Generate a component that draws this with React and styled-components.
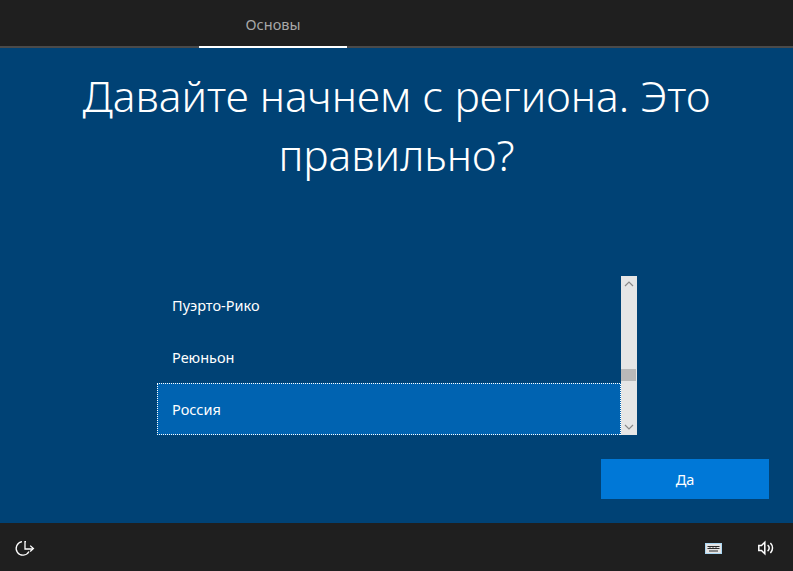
import React from "react";
import styled, { createGlobalStyle } from "styled-components";

const Global = createGlobalStyle`
  html, body { margin: 0; padding: 0; background: #1f1f1f; }
  body { font-family: "Noto Sans", sans-serif; }
`;

const Page = styled.div`
  width: 793px;
  height: 571px;
  display: flex;
  flex-direction: column;
  overflow: hidden;
`;

const TopBar = styled.header`
  height: 46px;
  flex: none;
  background: #1f1f1f;
  border-bottom: 2px solid #4a4a4a;
  padding-left: 199px;
  display: flex;
`;

const Tab = styled.div`
  width: 148px;
  height: 48px;
  box-sizing: border-box;
  border-bottom: 2px solid #ffffff;
  color: #a8a8a8;
  font-size: 14.5px;
  line-height: 49px;
  text-align: center;
`;

const Main = styled.main`
  flex: 1;
  background: #004275;
  display: flex;
  flex-direction: column;
  align-items: center;
  min-height: 0;
`;

const Title = styled.h1`
  margin: 18px 0 0;
  width: 680px;
  height: 210px;
  flex: none;
  color: #ffffff;
  font-weight: 300;
  font-size: 42.6px;
  line-height: 59px;
  text-align: center;
`;

const ListWrap = styled.div`
  width: 480px;
  height: 159px;
  margin-left: 1px;
  display: flex;
  flex: none;
`;

const List = styled.ul`
  width: 464px;
  margin: 0;
  padding: 3px 0 0;
  list-style: none;
  display: flex;
  flex-direction: column;
`;

const Item = styled.li`
  height: 52px;
  box-sizing: border-box;
  padding-left: 15px;
  display: flex;
  align-items: center;
  color: #ffffff;
  font-size: 14.5px;
  ${(p) =>
    p.$selected &&
    `
    background-color: #0063b1;
    background-image:
      repeating-linear-gradient(90deg, #fff 0 1px, transparent 1px 2px),
      repeating-linear-gradient(90deg, #fff 0 1px, transparent 1px 2px),
      repeating-linear-gradient(0deg, #fff 0 1px, transparent 1px 2px),
      repeating-linear-gradient(0deg, #fff 0 1px, transparent 1px 2px);
    background-size: 100% 1px, 100% 1px, 1px 100%, 1px 100%;
    background-position: 0 0, 0 100%, 0 0, 100% 0;
    background-repeat: no-repeat;
  `}
`;

const Scrollbar = styled.div`
  width: 16px;
  background: #e6e6e6;
  display: flex;
  flex-direction: column;
  align-items: center;
  justify-content: space-between;
  position: relative;
`;

const Arrow = styled.svg`
  width: 16px;
  height: 16px;
  flex: none;
`;

const Thumb = styled.div`
  position: absolute;
  left: 0;
  top: 93px;
  width: 15px;
  height: 12px;
  background: #b9b9b9;
`;

const Actions = styled.div`
  width: 793px;
  box-sizing: border-box;
  padding: 24px 24px 0 0;
  display: flex;
  justify-content: flex-end;
`;

const Button = styled.button`
  width: 168px;
  height: 40px;
  border: 0;
  background: #0078d7;
  color: #ffffff;
  font-size: 14.5px;
  font-family: "Noto Sans", sans-serif;
  padding: 0;
`;

const BottomBar = styled.footer`
  height: 48px;
  flex: none;
  background: #1f1f1f;
  display: flex;
  align-items: center;
  padding: 0 19px 0 16px;
`;

const IconSlot = styled.svg`
  flex: none;
  width: ${(p) => p.$w}px;
  height: ${(p) => p.$h}px;
  margin-left: ${(p) => p.$ml || 0}px;
  margin-top: 2px;
  overflow: visible;
`;

const Spacer = styled.div`
  flex: 1;
`;

export default function App() {
  return (
    <Page>
      <Global />
      <TopBar>
        <Tab>Основы</Tab>
      </TopBar>
      <Main>
        <Title>Давайте начнем с региона. Это правильно?</Title>
        <ListWrap>
          <List>
            <Item>Пуэрто-Рико</Item>
            <Item>Реюньон</Item>
            <Item $selected>Россия</Item>
          </List>
          <Scrollbar>
            <Arrow viewBox="0 0 16 16" fill="none" stroke="#8a8a8a" strokeWidth="1.2">
              <path d="M4 10 L8 6 L12 10" />
            </Arrow>
            <Thumb />
            <Arrow viewBox="0 0 16 16" fill="none" stroke="#8a8a8a" strokeWidth="1.2">
              <path d="M4 6 L8 10 L12 6" />
            </Arrow>
          </Scrollbar>
        </ListWrap>
        <Actions>
          <Button>Да</Button>
        </Actions>
      </Main>
      <BottomBar>
        <IconSlot $w={18} $h={16} viewBox="0 0 18 16" fill="none" stroke="#ffffff" strokeWidth="1.3">
          <path d="M6 1.6 A6.8 6.8 0 1 0 13 11.5" />
          <path d="M9 1.6 H10" />
          <path d="M9 1 V9 H17" />
          <path d="M14.2 5.6 L17.4 8.6 L14.2 11.4" />
        </IconSlot>
        <Spacer />
        <IconSlot $w={17} $h={11} viewBox="0 0 17 11">
          <rect x="0.5" y="0.5" width="16" height="10" fill="#e4e4e4" stroke="#a9d6f2" strokeWidth="1" />
          <path d="M2.5 3.5 H14.5 M2.5 5.5 H14.5 M4 8 H13" stroke="#2a2a2a" strokeWidth="1" />
          <path d="M5 3 V6 M8 3 V6 M11 3 V6" stroke="#2a2a2a" strokeWidth="0.8" />
        </IconSlot>
        <IconSlot $ml={36} $w={16} $h={14} viewBox="0 0 16 14" fill="none" stroke="#ffffff" strokeWidth="1.5">
          <path d="M0.8 4.5 H3.5 L6.8 1.2 V12.8 L3.5 9.5 H0.8 Z" />
          <path d="M9.6 4 A3.6 3.6 0 0 1 9.6 10" />
          <path d="M12.4 2 A7 7 0 0 1 12.4 12" />
        </IconSlot>
      </BottomBar>
    </Page>
  );
}
